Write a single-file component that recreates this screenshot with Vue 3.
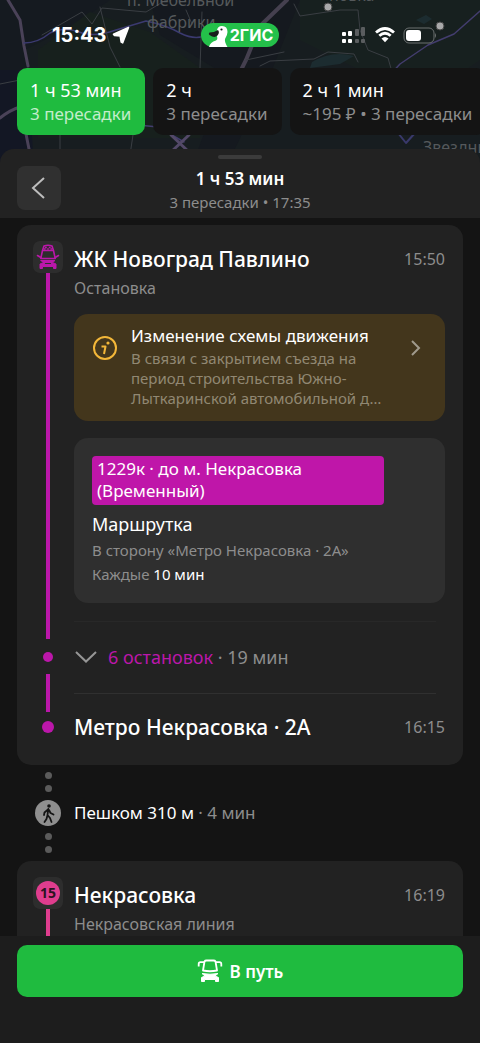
<script setup>
const options = [
  { time: '1 ч 53 мин', note: '3 пересадки', active: true },
  { time: '2 ч', note: '3 пересадки', active: false },
  { time: '2 ч 1 мин', note: '~195 ₽ • 3 пересадки', active: false },
]
</script>

<template>
  <div class="screen">
    <header class="hero">
      <svg class="map" viewBox="0 0 480 170" preserveAspectRatio="xMidYMin slice" aria-hidden="true">
        <rect width="480" height="170" fill="#171d20" />
        <path d="M0 0H110L70 28 24 50 28 66 0 80z" fill="#151a20" />
        <path d="M150 0h150l-30 75-38 80h-36l30-80-66-40z" fill="#15191f" />
        <path d="M0 70h28l6 100H0z" fill="#131724" />
        <path d="M38 50 90 12l60 20 50 36v70H38z" fill="#17201d" />
        <path d="M300 0h180v60l-60 40-120-60z" fill="#17201f" />
        <path d="M312 62q20-12 42-6l-14 8-30 4zM416 20l10-5 6 4-8 5z" fill="#1c2c30" />
        <g fill="none" stroke-linecap="round" stroke-linejoin="round">
          <path d="M8 0 20 20 24 46 28 66M0 118q10-8 20-11M26 134l4 20" stroke="#4a4258" stroke-width="3" />
          <path d="M287 0 260 26 246 60l-20 40" stroke="#45404f" stroke-width="4" />
          <path d="M24 43q14 0 26-10 14-7 32 0 14 4 34-3l30-9q20 4 34 12 14 7 24 3" stroke="#3b3a70" stroke-width="1.500" />
          <path d="M480 11 454 34 428 45 400 64 376 90M128 124l30 3 26 15" stroke="#433d6e" stroke-width="1.500" />
          <path d="m171 135 18 17m0-17-18 17" stroke="#534968" stroke-width="3" />
          <path d="m398 133 8 10 9-10" stroke="#39396b" stroke-width="2" />
          <path d="M42 35 82 12l10 12 10-16 44 4 20-12M100 7l10 40 10 20M0 84l20-4M60 135v20M133 135l-3 20M202 12l-2 56M186 10l6 14M294 4l6 12 40-6h18l2 20 8 20 20 8 4 14M260 66l10-5 44-2 14-7 26 2 4 8M246 60l38-8" stroke="#3a3e43" stroke-width="1" />
        </g>
        <g class="map-label">
          <text x="127" y="6">п. Мебельной</text>
          <text x="147" y="28">фабрики</text>
          <text x="423" y="153">Звездный</text>
          <text x="329" y="1">новка</text>
        </g>
        <circle cx="328" cy="7" r="4" fill="#a9a9aa" stroke="#444" />
        <circle cx="440" cy="26" r="4" fill="#a9a9aa" stroke="#444" />
      </svg>

      <div class="status">
        <div class="clock">
          <span>15:43</span>
          <svg width="18" height="18" viewBox="0 0 18 18" aria-hidden="true"><path d="M16.500 1.500 1.500 8.200l1 1.300 5.700.500 1 6 1.500.800z" fill="#fff" stroke="#fff" stroke-width="1.600" stroke-linejoin="round" /></svg>
        </div>
        <div class="brand">
          <svg width="24" height="24" viewBox="0 0 24 24" aria-hidden="true">
            <path d="M3 24Q4 19 10 17.500q2-1.200 1-4-1-3-.2-5.500Q11.500 3 16 3q5.500 0 5.500 6 0 3-2.500 7-.600 3 2.500 8z" fill="#fff" />
            <path d="M12 7Q8 9.500 3.500 9.500q-1.500 1.500 0 2.500 5 3.500 8 .500 2.500-3 .5-5.500z" fill="#171d1b" />
            <circle cx="15.500" cy="6.500" r="1.100" fill="#171d1b" />
          </svg>
          <span>2ГИС</span>
        </div>
        <div class="indicators">
          <svg width="26" height="18" viewBox="0 0 26 18" aria-hidden="true">
            <g fill="#fff"><rect x="1" y="6" width="4" height="4" rx="1" /><rect x="7" y="5" width="4" height="5" rx="1" /><rect x="1" y="13" width="4" height="4" rx="1" /><rect x="7" y="13" width="4" height="4" rx="1" /></g>
            <g fill="#5a5d5f"><rect x="14" y="3" width="4" height="7" rx="1" /><rect x="20" y="1" width="4" height="9" rx="1" /><rect x="14" y="13" width="4" height="4" rx="1" /><rect x="20" y="13" width="4" height="4" rx="1" /></g>
          </svg>
          <svg width="22" height="18" viewBox="0 0 22 18" aria-hidden="true">
            <path d="M2 6.500q9-8 18 0M5.300 9.800q5.700-5 11.400 0" fill="none" stroke="#fff" stroke-width="2.800" />
            <path d="M7.500 12.500q3.500-3 7 0L11 16.200z" fill="#fff" />
          </svg>
          <svg width="34" height="18" viewBox="0 0 34 18" aria-hidden="true">
            <rect x="1" y="2" width="30" height="15" rx="5" fill="none" stroke="#6c7071" />
            <rect x="3" y="4" width="15" height="11" rx="3" fill="#fff" />
            <path d="M32 7q2 2.500 0 5z" fill="#6c7071" />
          </svg>
        </div>
      </div>

      <nav class="options" aria-label="Варианты">
        <button v-for="o in options" :key="o.note + o.time" type="button" class="option" :class="{ active: o.active }">
          <span class="time">{{ o.time }}</span>
          <span class="note">{{ o.note }}</span>
        </button>
      </nav>
    </header>

    <section class="sheet-head">
      <span class="grabber"></span>
      <button type="button" class="back" aria-label="Назад">
        <svg width="44" height="44" viewBox="0 0 44 44" aria-hidden="true"><path d="M27 12 16 22l11 10" fill="none" stroke="#bdbdbd" stroke-width="2" /></svg>
      </button>
      <div class="summary">
        <h1>1 ч 53 мин</h1>
        <p>3 пересадки • 17:35</p>
      </div>
    </section>

    <main class="route">
      <article class="card">
        <div class="row">
          <div class="rail">
            <span class="tile">
              <svg width="24" height="26" viewBox="0 0 24 26" fill="none" stroke="#bb17aa" stroke-width="1.600" stroke-linejoin="round" stroke-linecap="round" aria-hidden="true">
                <path d="M6.500 6.500 8 2Q12 .500 16 2l1.500 4.500M6.500 6.500h11L19.200 14.500H4.800z" />
                <path d="M9 3.500h1.800M12.800 3.500h1.800M8 5h1.500M11.200 5h1.600M14.500 5H16" stroke-width="1.300" stroke-linecap="butt" />
                <path d="M4.800 13.500 1.500 11.500M19.200 13.500l3.300-2" />
                <path d="M5 16.500h14l-2.500 2 3.500 1.500v4.500h-2.500v-2h-11v2H4V20l3.500-1.500z" fill="#bb17aa" stroke-width="1" />
                <path d="M9.500 19.500h5" stroke="#2d2d2d" stroke-width="1.200" />
              </svg>
            </span>
            <span class="line"></span>
          </div>
          <div class="body">
            <div class="stop">
              <h2>ЖК Новоград Павлино</h2>
              <time>15:50</time>
            </div>
            <p class="kind">Остановка</p>

            <button type="button" class="alert">
              <svg class="info" width="26" height="26" viewBox="0 0 26 26" fill="none" stroke="#f3b739" stroke-width="2" aria-hidden="true">
                <circle cx="13" cy="13" r="11" />
                <path d="M9.500 11.500h4L12 19" stroke-linejoin="round" />
                <circle cx="16" cy="8" r="1.600" fill="#f3b739" stroke="none" />
              </svg>
              <span class="alert-text">
                <span class="alert-title">Изменение схемы движения</span>
                <span class="alert-note">В связи с закрытием съезда на<br>период строительства Южно-<br>Лыткаринской автомобильной д…</span>
              </span>
              <svg class="chevron" width="12" height="18" viewBox="0 0 12 18" aria-hidden="true"><path d="m2 2 7 7-7 7" fill="none" stroke="#a09a8c" stroke-width="2" /></svg>
            </button>

            <div class="vehicle">
              <div class="badge">1229к · до м. Некрасовка (Временный)</div>
              <h3>Маршрутка</h3>
              <p>В сторону «Метро Некрасовка · 2А»</p>
              <p>Каждые <b>10 мин</b></p>
            </div>
            <hr>
          </div>
        </div>

        <div class="row middle">
          <div class="rail center"><span class="dot"></span></div>
          <button type="button" class="stops">
            <svg width="24" height="14" viewBox="0 0 24 14" aria-hidden="true"><path d="m2 2 10 9.500L22 2" fill="none" stroke="#969696" stroke-width="2" /></svg>
            <span><em>6 остановок</em> · 19 мин</span>
          </button>
        </div>

        <div class="row short">
          <div class="rail"><span class="line"></span></div>
          <hr>
        </div>

        <div class="row last">
          <div class="rail center"><span class="dot large"></span></div>
          <div class="stop">
            <h2>Метро Некрасовка · 2А</h2>
            <time>16:15</time>
          </div>
        </div>
      </article>

      <div class="walk">
        <div class="rail walk-rail">
          <span class="step"></span><span class="step"></span>
          <svg class="walker" width="26" height="26" viewBox="0 0 26 26" aria-hidden="true">
            <circle cx="13" cy="13" r="13" fill="#8f8f8f" />
            <circle cx="14" cy="6" r="1.800" fill="#141414" />
            <path d="M13.300 9 12.500 15 15 18l1.500 4M12.400 15.500 11.500 19l-2 3M13 9.500l-3.500 3L9 15M14 10l1.500 3 3 1.500" fill="none" stroke="#141414" stroke-width="1.800" stroke-linecap="round" stroke-linejoin="round" />
          </svg>
          <span class="step"></span><span class="step"></span>
        </div>
        <p>Пешком 310 м <span>· 4 мин</span></p>
      </div>

      <article class="card metro">
        <div class="row">
          <div class="rail">
            <span class="tile"><span class="metro-line">15</span></span>
            <span class="line"></span>
          </div>
          <div class="body">
            <div class="stop">
              <h2>Некрасовка</h2>
              <time>16:19</time>
            </div>
            <p class="kind">Некрасовская линия</p>
          </div>
        </div>
      </article>
    </main>

    <footer class="bottom">
      <button type="button" class="go">
        <svg width="26" height="24" viewBox="0 0 26 24" fill="none" stroke="#fff" stroke-width="1.800" stroke-linejoin="round" aria-hidden="true">
          <path d="M7.500 2.500Q8 1.500 9.500 1.500h7q1.500 0 2 1L20 11.500q-7 1.500-14 0z" />
          <path d="M7 3.200H3.500Q1.700 3.200 1.700 5v2.500M19 3.200h3.500q1.800 0 1.800 1.800v2.500" />
          <path d="M5 14.500q8 1.500 16 0l-3 2.500 3.500 1.500v4h-3V20.500h-11v2h-3v-4L8 17z" fill="#fff" stroke-width="1" />
        </svg>
        <span>В путь</span>
      </button>
    </footer>
  </div>
</template>

<style>
body {
  margin: 0;
  background: #141414;
}
</style>

<style scoped>
* {
  box-sizing: border-box;
}
.screen {
  display: flex;
  flex-direction: column;
  height: 100vh;
  overflow: hidden;
  background: #141414;
  color: #fff;
  font-family: "Noto Sans", sans-serif;
}
h1, h2, h3, p {
  margin: 0;
  font-weight: 500;
}
button {
  border: 0;
  margin: 0;
  padding: 0;
  background: none;
  color: inherit;
  font: inherit;
  text-align: left;
  cursor: pointer;
}
svg {
  display: block;
  flex: none;
}

.hero {
  position: relative;
  flex: none;
  padding-bottom: 14px;
}
.map {
  position: absolute;
  top: 0;
  left: 0;
  width: 100%;
  height: 170px;
}
.map-label {
  fill: #55595c;
  font-size: 16px;
}
.status {
  position: relative;
  display: grid;
  grid-template-columns: 1fr auto 1fr;
  align-items: center;
  height: 68px;
  padding: 2px 43px 0;
}
.clock {
  display: flex;
  align-items: center;
  gap: 5px;
  padding-left: 9px;
  font: 700 20px/24px Inter, sans-serif;
}
.brand {
  display: flex;
  align-items: center;
  height: 24px;
  padding: 0 6px 0 5px;
  border-radius: 12px;
  background: #24c04a;
  font: 700 16px/24px Inter, sans-serif;
}
.indicators {
  display: flex;
  justify-content: flex-end;
  align-items: center;
  gap: 7px;
}
.options {
  position: relative;
  display: flex;
  gap: 8px;
  padding-left: 17px;
  overflow: hidden;
}
.option {
  flex: none;
  padding: 10px 14px 9px 13px;
  border-radius: 10px;
  background: #141414;
  font-size: 17px;
  line-height: 24px;
  white-space: nowrap;
}
.option span {
  display: block;
}
.option .time {
  font-size: 18px;
}
.option .note {
  color: #8d8d8d;
}
.option.active {
  background: #1fbb3f;
}
.option.active .note {
  color: #c3edcb;
}

.sheet-head {
  position: relative;
  display: flex;
  flex: none;
  align-items: center;
  height: 69px;
  padding: 8px 17px 0;
  border-radius: 14px 14px 0 0;
  background: #222;
}
.grabber {
  position: absolute;
  top: 6px;
  left: 50%;
  width: 44px;
  height: 4px;
  margin-left: -22px;
  border-radius: 2px;
  background: #3b3b3b;
}
.back {
  border-radius: 8px;
  background: #303030;
}
.summary {
  flex: 1;
  padding: 4px 44px 0 0;
  text-align: center;
}
.summary h1 {
  font-size: 17px;
  font-weight: 600;
  line-height: 24px;
}
.summary p {
  color: #8d8d8d;
  font-size: 15px;
  font-weight: 400;
  line-height: 22px;
}

.route {
  flex: 1;
  min-height: 0;
  overflow: hidden;
  padding: 7px 17px 0;
}
.card {
  padding: 16px 18px 23px 15px;
  border-radius: 14px;
  background: #222;
}
.row {
  display: grid;
  grid-template-columns: 32px minmax(0, 1fr);
  column-gap: 10px;
}
.row.middle {
  align-items: center;
  min-height: 35px;
}
.row.short {
  height: 38px;
  align-items: center;
}
.row.last {
  align-items: center;
  min-height: 30px;
}
.rail {
  display: flex;
  flex-direction: column;
  align-items: center;
  align-self: stretch;
}
.rail.center {
  justify-content: center;
}
.tile {
  display: grid;
  place-items: center;
  width: 30px;
  height: 32px;
  border-radius: 7px;
  background: #2d2d2d;
}
.line {
  flex: 1;
  width: 4px;
  background: #bb17aa;
}
.dot {
  width: 10px;
  height: 10px;
  border-radius: 50%;
  background: #bb17aa;
}
.dot.large {
  width: 12px;
  height: 12px;
}
.body {
  padding-top: 4px;
}
.stop {
  display: flex;
  align-items: center;
  justify-content: space-between;
}
.stop h2 {
  font-size: 21px;
  line-height: 28px;
}
.stop time {
  color: #8d8d8d;
  font-size: 16px;
  line-height: 24px;
}
.kind {
  margin-top: 3px;
  color: #8d8d8d;
  font-size: 16px;
  font-weight: 400;
  line-height: 24px;
}
.alert {
  display: flex;
  width: 100%;
  margin-top: 14px;
  padding: 9px 23px 13px 18px;
  border-radius: 14px;
  background: #43361c;
}
.info {
  margin-top: 12px;
}
.alert-text {
  flex: 1;
  padding-left: 13px;
}
.alert-text span {
  display: block;
}
.alert-title {
  font-size: 17px;
  line-height: 25px;
}
.alert-note {
  color: #918873;
  font-size: 15px;
  line-height: 20px;
}
.chevron {
  margin-top: 16px;
}
.vehicle {
  margin-top: 17px;
  padding: 18px 18px 17px;
  border-radius: 14px;
  background: #2f2f2f;
}
.badge {
  max-width: 292px;
  padding: 2px 5px 3px;
  border-radius: 4px;
  background: #bf16a9;
  font-size: 17px;
  line-height: 22px;
}
.vehicle h3 {
  margin-top: 5px;
  font-size: 18px;
  font-weight: 400;
  line-height: 28px;
}
.vehicle p {
  color: #8d8d8d;
  font-size: 15px;
  font-weight: 400;
  line-height: 24px;
}
.vehicle p b {
  color: #fff;
  font-weight: 400;
}
hr {
  width: calc(100% - 9px);
  height: 1px;
  margin: 0;
  border: 0;
  background: #303030;
}
.body hr {
  margin: 18px 0 17px;
  background: #282828;
}
.stops {
  display: flex;
  align-items: center;
  gap: 10px;
  color: #8d8d8d;
  font-size: 18px;
  line-height: 24px;
}
.stops em {
  color: #bb17aa;
  font-style: normal;
}

.walk {
  display: grid;
  grid-template-columns: 32px minmax(0, 1fr);
  column-gap: 10px;
  align-items: center;
  padding: 7px 18px 8px 15px;
}
.walk-rail {
  gap: 6px;
}
.step {
  width: 7px;
  height: 7px;
  border-radius: 50%;
  background: #5b5b5b;
}
.walk p {
  font-size: 17px;
  font-weight: 400;
  line-height: 24px;
}
.walk p span {
  color: #8d8d8d;
}
.walker {
  margin: 2px 0 1px;
}
.metro .line {
  min-height: 80px;
  background: #df3d8e;
}
.metro-line {
  width: 24px;
  height: 24px;
  border-radius: 50%;
  background: #df3d8e;
  color: #2b1320;
  font-size: 14px;
  font-weight: 700;
  line-height: 24px;
  text-align: center;
}

.bottom {
  flex: none;
  padding: 9px 17px 46px;
  background: #1d1d1d;
}
.go {
  display: flex;
  align-items: center;
  justify-content: center;
  gap: 7px;
  width: 100%;
  height: 52px;
  border-radius: 10px;
  background: #1fbb3f;
  font-size: 17px;
  font-weight: 600;
}
</style>
